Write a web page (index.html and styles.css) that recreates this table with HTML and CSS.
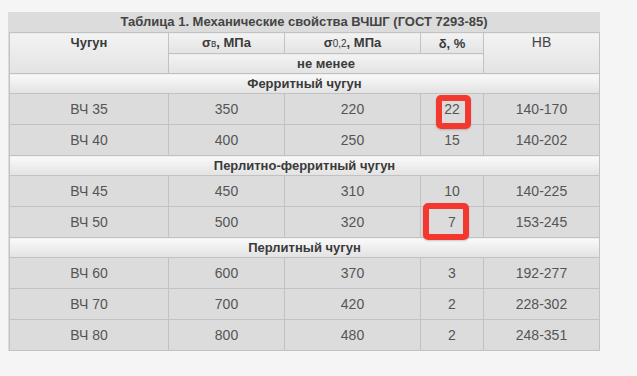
FILE: index.html
```html
<!DOCTYPE html>
<html lang="ru">
<head>
<meta charset="utf-8">
<link rel="stylesheet" href="styles.css">
</head>
<body>
<div class="wrap">
  <div class="caption">Таблица 1. Механические свойства ВЧШГ (ГОСТ 7293-85)</div>
  <table class="props">
    <colgroup>
      <col class="c1"><col class="c2"><col class="c3"><col class="c4"><col class="c5">
    </colgroup>
    <tr class="hrow">
      <th rowspan="2" class="top">Чугун</th>
      <th>σ<span class="idx">в</span>, МПа</th>
      <th>σ<span class="idx">0,2</span>, МПа</th>
      <th>δ, %</th>
      <th rowspan="2" class="top light">НВ</th>
    </tr>
    <tr class="hrow">
      <th colspan="3">не менее</th>
    </tr>
    <tr class="sec"><th colspan="5">Ферритный чугун</th></tr>
    <tr class="drow"><td>ВЧ 35</td><td>350</td><td>220</td><td class="mark"><span class="hl hl1"></span>22</td><td>140-170</td></tr>
    <tr class="drow"><td>ВЧ 40</td><td>400</td><td>250</td><td>15</td><td>140-202</td></tr>
    <tr class="sec"><th colspan="5">Перлитно-ферритный чугун</th></tr>
    <tr class="drow"><td>ВЧ 45</td><td>450</td><td>310</td><td>10</td><td>140-225</td></tr>
    <tr class="drow"><td>ВЧ 50</td><td>500</td><td>320</td><td class="mark"><span class="hl hl2"></span>7</td><td>153-245</td></tr>
    <tr class="sec"><th colspan="5">Перлитный чугун</th></tr>
    <tr class="drow"><td>ВЧ 60</td><td>600</td><td>370</td><td>3</td><td>192-277</td></tr>
    <tr class="drow"><td>ВЧ 70</td><td>700</td><td>420</td><td>2</td><td>228-302</td></tr>
    <tr class="drow"><td>ВЧ 80</td><td>800</td><td>480</td><td>2</td><td>248-351</td></tr>
  </table>
</div>
</body>
</html>
```
FILE: styles.css
```css
html, body {
  margin: 0;
  padding: 0;
  background: #f5f5f5;
}
body {
  font-family: "Liberation Sans", Arial, sans-serif;
  padding: 12px 0 0 8px;
}
.wrap {
  width: 592px;
  background: #dcdcdc;
}
.caption {
  height: 20px;
  line-height: 20px;
  text-align: center;
  font-size: 13px;
  font-weight: bold;
  color: #444;
}
.props {
  margin: 0 0 0 1px;
  width: 590px;
  table-layout: fixed;
  border-collapse: collapse;
  border: 1px solid #c2c2c2;
}
.c1 { width: 159px; }
.c2 { width: 116px; }
.c3 { width: 136px; }
.c4 { width: 63px; }
.c5 { width: 116px; }
.props th, .props td {
  border: 1px solid #c2c2c2;
  padding: 0;
  text-align: center;
}
.props th {
  font-size: 13px;
  font-weight: bold;
  color: #3a3a3a;
  background: linear-gradient(#f3f3f3, #e3e3e3);
}
.hrow th {
  height: 19px;
  line-height: 19px;
}
.props th.top {
  vertical-align: top;
}
.props th.light {
  font-weight: normal;
  font-size: 14px;
  color: #444;
}
.idx {
  font-size: 10px;
  font-weight: normal;
}
.sec th {
  height: 19px;
  line-height: 19px;
  background: linear-gradient(#fafafa, #e2e2e2);
}
.drow td {
  height: 30px;
  font-size: 14px;
  color: #555;
  background: #dcdcdc;
}
.mark {
  position: relative;
}
.hl {
  position: absolute;
  border: 6px solid #f4382f;
  border-radius: 5px;
  box-sizing: border-box;
  box-shadow: 0 1px 2px rgba(0,0,0,0.2);
}
.hl1 {
  left: 15px;
  top: 1px;
  width: 35px;
  height: 34px;
}
.hl2 {
  left: 2px;
  top: -4px;
  width: 46px;
  height: 37px;
}
```
